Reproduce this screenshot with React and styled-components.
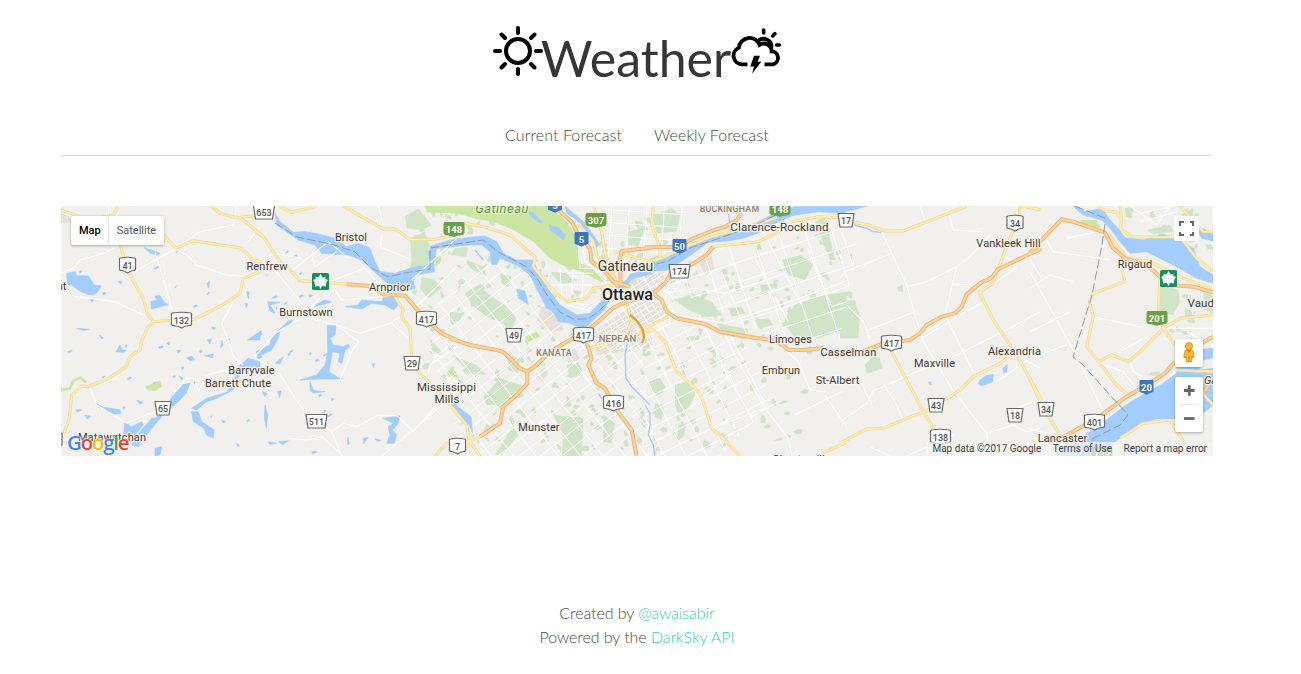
import React from 'react';
import styled, { createGlobalStyle } from 'styled-components';

const GlobalStyle = createGlobalStyle`
  *, *::before, *::after { box-sizing: border-box; }
  html { background: #fff; overflow: hidden; }
  body { margin: 0; font-family: Lato, sans-serif; font-weight: 300; font-size: 16px; line-height: 24px; color: #4a4a4a; }
`;

const Page = styled.div`
  width: 1274px;
  height: 674px;
  padding: 0 61px;
  display: flex;
  flex-direction: column;
`;
const Logo = styled.h1`
  margin: 0;
  padding-top: 19px;
  height: 115px;
  display: flex;
  justify-content: center;
  align-items: flex-start;
  font-weight: 400;
  color: #363636;
`;
const LogoText = styled.span`
  font-size: 50px;
  line-height: 78px;
  margin: 0 -1px 0 -3px;
`;
const LogoIcon = styled.svg`
  width: 52px;
  height: 52px;
  margin-top: 6px;
  flex: none;
  overflow: visible;
`;
const Nav = styled.nav`
  display: flex;
  justify-content: center;
  height: 41px;
  border-bottom: 1px solid #dbdbdb;
`;
const NavLink = styled.a`
  padding: 8px 16px;
  letter-spacing: 0.08px;
  color: #4a4a4a;
`;
const MapBox = styled.section`
  position: relative;
  margin-top: 50px;
  height: 250px;
  overflow: hidden;
  background: #f1f0ed;
  font-family: Roboto, sans-serif;
  font-weight: 400;
`;
const MapCanvas = styled.svg`
  display: block;
  width: 1152px;
  height: 250px;
`;
const Control = styled.div`
  position: absolute;
  background: #fff;
  border-radius: 2px;
  box-shadow: 0 1px 3px rgba(0, 0, 0, 0.3);
  display: flex;
`;
const TypeSwitch = styled(Control)`
  left: 10px;
  top: 10px;
  height: 29px;
`;
const TypeButton = styled.span`
  padding: 0 ${(p) => (p.$active ? 7 : 8)}px 0 8px;
  font-size: 11px;
  line-height: 29px;
  font-weight: ${(p) => (p.$active ? 500 : 400)};
  color: ${(p) => (p.$active ? '#000' : '#565656')};
  & + & { border-left: 1px solid #e6e6e6; }
`;
const Fullscreen = styled(Control)`
  right: 14px;
  top: 10px;
  width: 25px;
  height: 25px;
  box-shadow: none;
`;
const Pegman = styled(Control)`
  right: 10px;
  top: 133px;
  width: 28px;
  height: 28px;
`;
const Zoom = styled(Control)`
  right: 10px;
  top: 171px;
  width: 28px;
  height: 55px;
  flex-direction: column;
  align-items: center;
`;
const ZoomRule = styled.i`
  width: 19px;
  height: 1px;
  background: #e6e6e6;
`;
const Terms = styled.div`
  position: absolute;
  right: 0;
  bottom: 0;
  height: 14px;
  padding: 0 6px;
  display: flex;
  gap: 11.5px;
  font-size: 10px;
  line-height: 14px;
  color: #444;
  background: rgba(245, 245, 245, 0.7);
`;
const Google = styled.div`
  position: absolute;
  left: 6px;
  bottom: 1px;
  font: 600 20.5px/26px 'Open Sans', sans-serif;
  letter-spacing: -1.25px;
  text-shadow: 0 0 2px #fff, 0 0 2px #fff;
`;
const Letter = styled.span`
  color: ${(p) => p.$c};
`;
const Footer = styled.footer`
  margin-top: 145px;
  letter-spacing: -0.06px;
  text-align: center;
`;
const Line = styled.p`
  margin: 0;
`;
const Link = styled.a`
  color: #1fd6b6;
`;

/* Map geometry: each sector is drawn at three units per pixel from its own left edge. */
const sectors = [
  {
    x: 60,
    water: 'M20,205L45,200 50,212 85,213 103,240 124,243 112,262 100,270 82,268 60,258 35,240 22,240ZM272,290L290,285 285,273 300,272 312,290 325,300 300,305 275,312ZM50,370L88,373 70,377ZM118,390l12,8-4,4zM168,440l12,-20 6,14 13,2-8,6zM380,458l14,-5 10,10-14,4zM433,452L460,447 458,458ZM440,235l10,-5-4,20zM562,405L600,380 600,405ZM252,128l48,16-4,6-25,-5zM390,535L378,565 360,585 330,612 318,615 300,642 286,640 325,600 335,570 355,555 370,538ZM105,593L130,607 180,614 184,625 165,627 120,608ZM195,652L215,665 245,650 250,660 225,690 190,690ZM215,720L240,680 275,640 300,640 260,690 235,725ZM540,480L565,460 600,470 600,490 560,495 540,510 520,555 470,580 440,590 410,615 395,610 440,580 500,562 520,530ZM395,620L415,620 425,650 440,660 462,675 460,700 440,690 432,670 400,650ZM285,730l20,-5-5,25-15,5zM358,512l12,8-6,5zM442,405l12,-2-4,14zM485,405l5,15-8,8zM320,415l8,-5 0,10zM455,365l12,4-8,5zM560,260l7,1-2,20zM555,295l8,2-4,12zM175,230l10,-2-2,10zM75,630l18,4-12,8zM230,585l20,8-10,5zM485,645l12,5-8,3zM530,715l8,5-4,5z',
    park: 'M255,545L300,527 305,545 285,558 262,556Z',
    parkLine: 'M0,556L30,550 38,530 60,518 78,532',
    urban: 'M3,25L28,35 40,55 3,55Z',
    yellow: 'M180,118L205,200 235,255 250,280 262,325 280,350 315,347 395,345 440,325 490,298 540,265 550,220 600,200M280,350L262,370 245,405 240,435 210,455 198,485 150,518 85,545 65,543 35,570 30,620 25,650 10,690M310,88L347,130 400,107 470,118 545,130 580,165 605,170M3,15L60,35 120,37 160,30 175,3M455,3L480,25 530,38 605,30M540,38L605,90',
    white: 'M3,205L40,190 60,165 130,145 180,120M225,198L347,132 380,150 410,180 500,210 590,217M0,262L50,275 165,290 250,330M285,140L325,270 335,315M520,290L485,355 510,420 520,455 550,480M90,548L110,600 200,655 270,625 300,630 330,580 380,520 405,520 415,560 440,510 520,490M145,3L150,120M347,130L420,80 520,60 530,3M565,110L600,65',
  },
  {
    x: 255,
    water: 'M60,25L75,50 115,82 150,80 190,87 240,100 275,125 310,115 345,130 360,170 375,200 420,205 465,190 500,182 525,180 520,140 540,118 600,105 600,125 545,130 535,180 540,200 480,210 475,230 480,250 430,262 385,225 320,165 280,150 200,145 180,120 130,105 65,60ZM270,305L310,300 320,285 380,290 385,278 425,275 430,300 415,315 390,300 350,295 320,312ZM165,308L190,295 210,285 230,290 200,300ZM217,362L243,362 240,390 225,400 235,420 265,425 280,418 285,425 270,435 260,475 250,470 255,445 232,440 222,500 250,518 262,522 200,522 135,525 185,510 210,480 218,440ZM38,290L75,292 45,300 60,325 45,318ZM65,380l35,-32 15,-2-20,20zM3,395l15,-18 3,12zM3,440L45,420 50,395 75,378 70,400 50,435 10,455ZM385,640L435,632 430,655 413,675 425,690 417,715 395,715 405,690 400,665 415,655ZM325,700l15,-3-15,20zM278,697l5,20-5,2zM30,600l8,30-4,40-6,-30zM22,560l15,5-8,10zM165,530l10,25-10,-3zM165,555l45,5-35,4zM350,478l8,-4-2,14zM40,710l25,5-20,3zM70,710l30,-3-16,12zM60,475l25,-20-10,22zM360,702l18,4-10,3zM228,580l8,2-5,5zM68,560l10,-2-4,20z',
    park: 'M510,3L605,3 605,25 515,22ZM540,160l15,-8 5,15-15,15zM575,500l20,-15 5,25-20,5z',
    green: 'M450,35L490,10 530,60 500,75 455,70ZM465,100L510,80 525,130 520,180 470,180ZM500,215L540,225 560,250 520,280 495,250ZM525,400L560,440 555,450 530,435ZM515,365l35,5-20,10zM555,250l15,25-12,5zM470,160l35,5-15,30-25,-5z',
    urban: 'M30,205l12,5-8,8zM365,245l20,25-18,-5zM365,232l50,20-10,12z',
    yellow: 'M0,80L25,95 55,140 75,170 100,190 135,227 275,237M75,5L110,22 185,3M0,205L25,190 0,165M265,3L330,40 385,72 420,72 465,103 540,103 600,90M420,275L445,315 440,335 465,370 470,450 490,500 545,555 605,622M540,753L575,715 605,715',
    orange: 'M275,238L345,243 385,268 450,272 510,340 560,385 605,405',
    white: 'M50,185L100,245 165,325 180,345 245,360 315,385 405,355 490,300 605,185M100,205L170,150 220,110 280,160M170,150L180,185 245,140M210,235L330,190 360,225M230,240L260,285 380,275M180,300L140,340 60,385 0,455M245,360L310,410 290,440 255,525M3,460L70,500 120,580 150,620 230,680 265,655 305,665 370,630 425,632 475,680 545,600M380,753L480,670 605,560M100,700L155,705 200,695 265,753M410,355L460,400M520,505L525,480 605,425M200,275L165,310M230,680L260,753M0,170L60,145 140,160M370,3L385,60 M380,90L375,125 460,160M470,225L605,100',
  },
  {
    x: 450,
    water: 'M-60,125L0,105 75,95 105,93 140,110 160,145 200,165 250,165 262,195 285,240 330,300 380,330 420,325 460,282 480,275 463,315 430,345 400,372 360,355 325,350 310,320 290,310 265,260 240,210 200,180 150,160 140,178 125,178 120,140 95,120 60,120 0,125ZM345,3L370,25 400,50 430,90 448,118 438,130 410,85 380,45 350,25ZM470,285L500,245 530,225 540,208 605,192 605,207 545,222 530,240ZM200,252L225,258 235,298 205,280ZM298,60L325,68 345,88 340,105 325,92 300,75ZM230,15l22,10 25,28-10,0-25,-20zM8,570l15,35 40,30 5,50-10,-25-30,-20-20,-35z',
    waterLine: 'M540,350L535,400 525,450 528,520 545,545 600,600M75,135L100,165M445,565L455,580',
    park: 'M-75,3L300,3 350,50 375,90 385,130 390,175 430,190 465,215 455,232 395,200 340,182 300,160 250,110 190,75 130,50 80,42 20,25 -60,22ZM225,395L260,380 270,395 235,410ZM0,490l20,10 5,20-25,-10z',
    green: 'M45,265L85,240 125,275 165,300 200,335 185,375 150,350 110,335 65,300ZM15,130L55,125 50,155 0,150ZM50,165L100,185 110,215 60,190ZM150,205L185,215 175,245 155,235ZM100,575L150,520 215,540 205,570 160,600 110,600ZM5,450L80,480 110,510 60,505ZM310,630L400,640 395,753 335,753 340,690ZM350,480l35,-10 5,40-30,10zM170,450l40,10-5,45-30,-10zM460,630l35,25-10,60-25,-5zM190,660l15,30-50,60-20,0zM535,80l50,-15-20,60-30,-5zM0,320l40,5-15,25-25,-5zM235,190l18,20-15,5zM300,200l50,5 25,30-50,-5z',
    urban: 'M275,305L300,305 330,335 340,375 300,380 260,345ZM345,440l30,-10 15,35-35,10zM430,380L500,330 560,295 605,290 605,420 520,440 440,450ZM500,240l40,-20 60,10 0,50-60,20zM260,510l25,-25 10,20-20,25zM370,255l30,5-20,15z',
    yellow: 'M0,60L45,55 100,65 180,90 225,130 255,155 250,185 290,235 330,275 350,290 410,280 430,250 490,240M385,55L430,110 440,150 490,220M430,3L455,80 465,145 500,235M0,600L50,660 60,720 0,750M60,710L90,753M60,710L90,695M415,430L520,405 605,370M490,140L605,170M530,290L545,350 520,405',
    orange: 'M0,400L60,420 150,437 165,445 210,490 232,500 260,480 300,440 360,405 420,370 450,345 490,308 530,290 580,275 605,270M232,500L232,535 205,565 160,605 150,655 90,695M325,15L365,50 385,90 420,130 425,170 460,195 490,230 505,245M512,235L510,160 515,138 605,128M410,415L425,460 415,480 440,535 465,550 500,615 545,675 560,753M490,230L540,245',
    white: 'M385,135L390,190 430,190 470,235M400,135L405,170 435,190 470,225M350,205L430,205M300,200L290,240 430,240M330,190L335,270M370,195L365,260M400,200L395,280M350,300L410,315 490,260M340,290L420,300',
  },
  {
    x: 645,
    water: 'M0,185L60,160 100,130 140,115 200,100 260,85 330,55 380,30 450,5 600,3 600,25 520,20 450,30 400,50 350,80 300,98 250,108 190,112 130,155 70,195 0,200Z',
    waterLine: 'M0,600L15,625 15,660 10,690 25,720 30,753M255,60L250,25',
    park: 'M15,160l30,-10 5,15-30,8zM330,125l15,-8 5,15-12,3z',
    green: 'M90,285L145,265 165,275 200,290 232,330 185,337 130,315ZM430,320L460,290 540,270 605,260 605,370 520,400 450,400 420,360ZM410,165L470,150 505,180 480,225 430,210ZM510,50l30,-15 30,130-15,0zM90,540L145,525 150,570 130,610 100,630 90,600ZM5,530l40,-10 20,30-35,25zM20,30l60,-20 25,20-10,50-60,5zM215,355l80,15 10,35-70,-15zM250,310l40,-5 10,20-40,10zM30,595l25,5-5,45-20,-10zM100,660l25,-5-10,40-20,15zM330,345l40,-5 15,20-40,10zM345,240l45,-5-10,20-30,5z',
    urban: 'M0,200L60,200 55,240 25,260 0,250ZM160,170l40,-15 10,40-30,15zM0,290L35,290 60,330 0,360ZM155,195l10,25-25,-10z',
    yellow: 'M25,3L20,60 45,130 45,165M0,175L60,155 110,130 200,95 330,60 395,38M190,130L205,125 340,110 400,80 440,50 520,35 605,38M0,375L25,375 60,410 95,500 150,550 170,575 200,670 240,705 285,753M0,370L70,335M530,745L605,712',
    orange: 'M0,127L100,125 145,100 200,78 240,65 275,45 290,25M25,265L60,235 80,200 130,185 185,150 205,125M0,265L25,265 50,285 65,320 95,340 180,357 225,380 320,397 395,407 430,435 480,435 535,430',
    white: 'M60,265L150,250 240,265 320,240 420,205M95,330L240,355 420,295 600,230M370,110L420,205 470,300M490,135L560,305 605,290M395,410L460,470 495,555 540,560M240,390L280,470 360,610 430,700 440,753M360,610L200,670M180,370L250,520 320,635 400,590M270,500L130,610M450,630L590,560M540,570L605,665M230,200L310,400M330,160L430,350',
  },
  {
    x: 840,
    water: 'M0,3L80,3 40,15 0,22ZM415,535L420,525 438,512 460,508 458,530 425,543ZM488,490l14,-12-2,22-8,3zM265,533l8,-3 0,10z',
    waterLine: 'M42,60L80,70 100,80 125,82',
    green: 'M0,290L45,285 60,340 55,400 0,400ZM75,480L100,452 120,460 128,490 80,507ZM172,245l15,-5 2,22-15,-3z',
    yellow: 'M35,50L85,60 135,78 190,78 300,35 380,3M540,3L538,30 510,100 475,190 460,235 418,262 460,345 530,450 605,585M545,3L605,15M150,430L200,525 250,620 300,700 320,753M0,715L80,672 130,670 220,632 255,620 330,575 360,555 400,515 480,475 515,450M0,455L60,445',
    orange: 'M60,442L130,415 210,405 240,385 260,360 305,335 345,325 365,305 380,268 420,235 455,218 475,192 605,130',
    white: 'M125,80L155,145 200,240 225,330 250,410 335,550 440,685 450,753M0,220L15,200 155,145M200,245L260,230 350,185 385,160 450,90M350,185L315,330 400,500M85,375L225,320M245,400L430,290M120,550L140,540 230,500 330,460 480,385 600,320M0,650L80,595 100,555 135,545 165,590 190,645M0,520L65,535 100,610M340,237L410,240M500,155L530,190 460,235M530,450L600,490M470,530L600,440M440,685L520,660 560,680 600,670M240,3L260,60 M325,20L340,75 430,80M5,80L40,185M550,130L605,220M20,300L70,350 90,400M90,725L150,753M200,753L340,690M590,585L530,610',
  },
  {
    x: 1030,
    water: 'M128,3L140,3 165,20 205,12 225,22 240,45 268,75 285,98 340,105 400,88 450,105 490,130 510,185 549,210 549,235 500,220 440,185 400,165 350,140 300,145 270,110 240,70 215,45 160,30ZM495,60L549,85 549,108 515,100ZM80,753L110,722 200,668 280,605 320,580 400,535 440,505 549,490 549,600 500,640 380,642 330,655 300,680 240,720 200,753ZM440,440L549,430 549,458 520,465 500,510 440,510ZM490,560L549,570 549,590 500,600Z',
    park: 'M150,45L200,45 212,70 190,75 155,65ZM320,125l35,-10 5,12-25,10z',
    green: 'M385,240L445,255 450,290 430,330 390,325ZM350,75L420,60 430,80 370,88ZM465,310l30,10-5,25-25,-10zM365,500l25,0-5,15-30,-5zM450,30l40,-20 0,30zM520,255l29,15 0,60-29,-20zM285,10l25,-5-5,35-18,-5zM445,375l40,5-20,10zM150,730l40,-5 0,28-40,0z',
    urban: 'M505,520l44,-10 0,50-44,-5z',
    yellow: 'M200,3L230,18 260,22 275,45 270,70 305,95 400,97 450,95 500,160 549,200M270,3L275,50M235,85L290,160 360,170 460,220 549,250M275,185L285,230 190,265 178,290 190,335 170,425 205,470 260,540 300,575M205,470L245,450 295,470 330,440 400,370 450,340 549,330M390,210L385,330 400,370 435,420M0,520L30,590 90,690 120,720M270,700L340,655 420,645 470,725M500,545L549,600M435,495L549,500M450,3L520,80 549,80',
    orange: 'M0,145L30,110 95,43 130,50 225,83 250,130 285,160 350,180 420,240 490,245 549,262M75,710L200,640 290,575 350,540 405,505 435,470M515,415L549,395M520,565L549,520',
    white: 'M0,200L130,435 230,640M30,70L70,140 180,155 240,165M0,250L60,210 130,230M0,380L120,320M190,335L330,365 420,350M0,460L110,420M110,100L200,80M210,475L280,500 320,550M300,470L310,500 360,530M300,3L380,60 420,3M310,30L430,3M330,50L440,20M460,210L490,330M470,380L549,420M0,670L60,690M400,370L549,370M270,440L340,400',
  },
];

const boundaries = [
  'M275,223L297,237 335,245 355,252 370,267 388,277 405,273 430,269 430,248 470,242 483,240 500,253 527,267 538,280 547,295 560,312 573,319 587,319 597,313 610,300M645,267L668,261 690,248 720,238 760,223 785,210',
  'M1105,224L1102,245 1092,295 1073,357 1083,365 1128,415 1120,425 1090,440M1075,206L1092,213 1105,218',
];

/* Repeatable pseudo-random sequence for woodlots and concession roads. */
const sequence = (seed) => () => {
  seed = (seed * 16807) % 2147483647;
  return seed / 2147483647;
};

const woods = [
  [455, 255, 560, 330, 34, 38], [460, 330, 580, 450, 60, -36], [560, 345, 650, 450, 45, -32],
  [600, 212, 690, 262, 30, 10], [670, 270, 790, 350, 44, -20], [650, 350, 730, 450, 48, -25],
  [770, 235, 850, 350, 38, -15], [725, 330, 800, 450, 18, -20], [440, 210, 500, 265, 16, 30],
  [540, 255, 610, 300, 16, 0], [410, 210, 440, 290, 15, 0], [1145, 208, 1212, 245, 22, 10],
  [1155, 285, 1210, 335, 12, 0], [425, 300, 470, 380, 12, 30], [800, 290, 850, 335, 25, -15],
];
const woodPath = (() => {
  const next = sequence(4217);
  return woods.map(([x0, y0, x1, y1, n, tilt]) =>
    Array.from({ length: n }, () => {
      const x = x0 + next() * (x1 - x0);
      const y = y0 + next() * (y1 - y0);
      const a = ((tilt + (next() > 0.5 ? 90 : 0)) * Math.PI) / 180;
      const w = 2 + next() * 8;
      const h = 1.5 + next() * 4;
      const p = (u, v) => `${(x + u * Math.cos(a) - v * Math.sin(a)).toFixed(1)},${(y + u * Math.sin(a) + v * Math.cos(a)).toFixed(1)}`;
      return `M${p(0, 0)}L${p(w * 0.6, -1)} ${p(w, h * 0.3)} ${p(w * 0.8, h)} ${p(w * 0.3, h * 0.8)}Z`;
    }).join('')
  ).join('');
})();

const lakes = [[65, 250, 330, 455, 34], [230, 290, 330, 455, 12]];
const lakePath = (() => {
  const next = sequence(911);
  return lakes.map(([x0, y0, x1, y1, n]) =>
    Array.from({ length: n }, () => {
      const x = (x0 + next() * (x1 - x0)).toFixed(1);
      const y = (y0 + next() * (y1 - y0)).toFixed(1);
      const w = 1 + next() * 4;
      return `M${x},${y}l${w},${(-next() * 3).toFixed(1)} ${(w / 3).toFixed(1)},1.5 ${-w},2z`;
    }).join('')
  ).join('');
})();

const grids = [
  { id: 'west', area: 'M420,320L480,260 530,275 570,330 600,340 640,315 650,456 465,456Z', angle: -38, step: 13 },
  { id: 'south', area: 'M645,320L690,325 740,335 775,400 720,456 645,456Z', angle: -27, step: 14 },
  { id: 'east', area: 'M665,285L715,245 780,235 860,225 840,340 780,340Z', angle: -18, step: 19 },
  { id: 'city', area: 'M595,325L620,295 650,270 680,275 670,325 640,350 560,350Z', angle: -32, step: 5 },
  { id: 'north', area: 'M605,206L690,206 680,235 645,262 600,260Z', angle: 4, step: 13 },
];

const labels = [
  ['Bristol', 350.5, 241, 11], ['Renfrew', 266.5, 270, 11], ['Arnprior', 389, 291, 11.2], ['Burnstown', 305.5, 316, 11],
  ['Barryvale', 251, 374, 11], ['Barrett Chute', 237.5, 387, 11], ['Mississippi', 446, 391, 11.5], ['Mills', 446.5, 403, 11.5],
  ['Munster', 538.5, 431, 11], ['Limoges', 790, 343, 11], ['Casselman', 848, 356, 11], ['Embrun', 780.5, 374, 11],
  ['St-Albert', 837, 384, 11], ['Maxville', 934, 367, 11], ['Alexandria', 1014, 355, 11], ['Vankleek Hill', 1008, 247, 11],
  ['Clarence-Rockland', 779, 231, 11.6], ['Rigaud', 1134.5, 268, 11], ['Vaudreuil', 1211.5, 307, 11.5], ['Lancaster', 1062, 442, 11],
  ['Matawatchan', 111.5, 441, 11], ['Chesterville', 801, 463, 11], ['nt', 61, 290, 11],
];

/* Route markers: number, centre x, centre y, form. */
const shields = [
  ['653', 264, 212, 'county'], ['41', 127.5, 265, 'king'], ['132', 181.5, 320, 'king'], ['65', 163, 408, 'county'],
  ['417', 426.5, 319, 'king'], ['29', 412, 363, 'county'], ['511', 316.5, 421, 'county'], ['49', 514, 335, 'county'],
  ['417', 583.5, 335, 'king'], ['416', 613.5, 403, 'king'], ['7', 457.5, 446, 'king'], ['174', 679.5, 271, 'county'],
  ['17', 846, 220, 'county'], ['34', 1015, 223, 'king'], ['417', 891.5, 343, 'king'], ['43', 936, 405, 'county'],
  ['18', 1015, 415, 'county'], ['34', 1046, 409, 'county'], ['138', 940.5, 437, 'king'], ['401', 1094.5, 422, 'king'],
  ['148', 454, 229, 'green'], ['307', 596, 220, 'green'], ['148', 780, 209, 'green'], ['201', 1157, 318, 'green'], ['132', 1102, 454, 'green'],
  ['5', 581.5, 239, 'blue'], ['5', 555, 205, 'blue'], ['50', 679.5, 246, 'blue'], ['20', 1146.5, 387, 'blue'],
  ['', 54, 440, 'king'],
];

const shieldForm = {
  king: (w) => `M${-w + 1.5},-7Q0,-8.5 ${w - 1.5},-7Q${w},-7 ${w - 0.5},-4V3Q${w},5.5 ${w - 2.5},5.5Q3,5.8 0,8Q-3,5.8 ${-w + 2.5},5.5Q${-w},5.5 ${-w + 0.5},3V-4Q${-w},-7 ${-w + 1.5},-7Z`,
  county: (w) => `M${-w},-6.5H${w}L${w - 2},7H${-w + 2}Z`,
  green: (w) => `M${-w + 1},-6.5H${w - 1}L${w - 0.5},-5V4L${w - 1.5},5.5Q3,6 0,7.3Q-3,6 ${-w + 1.5},5.5L${-w + 0.5},4V-5Z`,
  blue: () => 'M-6.5,-6.5H6.5V4.5Q3,5.5 0,7.2Q-3,5.5 -6.5,4.5Z',
};
const shieldFill = { king: '#fff', county: '#fff', green: '#6a9f43', blue: '#3b76c4' };

function Shield({ text, x, y, form }) {
  const plain = form === 'king' || form === 'county';
  const half = text.length > 2 ? 10.5 : form === 'county' ? 8 : 8.5;
  return (
    <g transform={`translate(${x} ${y})`}>
      <path d={shieldForm[form](half)} fill={shieldFill[form]} stroke={plain ? '#6a6a6a' : shieldFill[form]} strokeWidth={plain ? 1.2 : 1} strokeLinejoin="round" />
      <text y="3.5" textAnchor="middle" fontSize={plain ? 9 : 9.5} fontWeight={plain ? 500 : 700} fill={plain ? '#555' : '#fff'}>{text}</text>
    </g>
  );
}

function ParkBadge({ x, y }) {
  return (
    <g transform={`translate(${x} ${y})`}>
      <rect x="-8.5" y="-8.5" width="17" height="17" rx="1.5" fill="#16915d" />
      <path d="M0,-7.5L2.2,-4 4.8,-4.8 5,-2.4 7.5,-1.6 5.8,1 5.4,5 2.6,4.4 .8,5 .7,7H-.7L-.8,5 -2.6,4.4 -5.4,5 -5.8,1 -7.5,-1.6 -5,-2.4 -4.8,-4.8 -2.2,-4Z" fill="#fff" />
    </g>
  );
}

function Sectors({ part, ...style }) {
  return (
    <g strokeLinejoin="round" {...style}>
      {sectors.map((s) => s[part] && <path key={s.x} d={s[part]} transform={`translate(${s.x} 205) scale(.33333)`} />)}
    </g>
  );
}

function Terrain() {
  return (
    <MapCanvas viewBox="61 206 1152 250">
      <Sectors part="urban" fill="#e7e1da" />
      <Sectors part="green" fill="#d0e4c8" />
      <path d={woodPath} fill="#d0e4c8" />
      <Sectors part="park" fill="#cbe6a3" />
      <Sectors part="parkLine" fill="none" stroke="#cbe6a3" strokeWidth="8" />
      <path d={lakePath} fill="#a3ccff" />
      {grids.map(({ id, area, angle, step }) => (
        <g key={id}>
          <clipPath id={id}><path d={area} /></clipPath>
          <g clipPath={`url(#${id})`}>
            <g transform={`rotate(${angle} 640 330)`} stroke="#fff" strokeWidth="0.9">
              {Array.from({ length: Math.ceil(600 / step) }, (_, i) => (
                <path key={i} d={`M340,${30 + i * step}H940M${340 + i * step * 1.35},30V630`} />
              ))}
            </g>
          </g>
        </g>
      ))}
      <Sectors part="water" fill="#a3ccff" stroke="#a3ccff" strokeWidth="2" />
      <Sectors part="waterLine" fill="none" stroke="#a3ccff" strokeWidth="4" />
      <Sectors part="white" fill="none" stroke="#fff" strokeWidth="3.2" />
      <Sectors part="yellow" fill="none" stroke="#f0d893" strokeWidth="9" />
      <Sectors part="yellow" fill="none" stroke="#ffebae" strokeWidth="5.5" />
      <Sectors part="orange" fill="none" stroke="#eeb36d" strokeWidth="12" />
      <Sectors part="orange" fill="none" stroke="#fdd09a" strokeWidth="7" />
      {boundaries.map((d) => <path key={d} d={d} fill="none" stroke="#8f959a" strokeWidth="0.9" strokeDasharray="9 3" />)}
      <path d="M630,315Q644,325 644,338L642,343" fill="none" stroke="#e3a13a" strokeWidth="2.2" />
      {shields.map(([t, x, y, form]) => <Shield key={`${t}-${x}`} text={t} x={x} y={y} form={form} />)}
      <ParkBadge x={320.5} y={281.5} />
      <ParkBadge x={1168.5} y={278.5} />
      <g textAnchor="middle" paintOrder="stroke" stroke="#f5f4f1" strokeWidth="2.5" strokeLinejoin="round" fill="#45392f">
        {labels.map(([t, x, y, size]) => <text key={t} x={x + 0.5} y={y} fontSize={size} letterSpacing="0.12">{t}</text>)}
        <text x="625.5" y="271" fontSize="14">Gatineau</text>
        <text x="627.5" y="299.5" fontSize="16" fontWeight="500" fill="#222">Ottawa</text>
        <text x="502" y="213" fontSize="12.8" fontStyle="italic" letterSpacing=".55" fill="#5f9944" stroke="#e4f2ce">Gatineau</text>
        <text x="1221" y="384" fontSize="11" fontStyle="italic">Garden</text>
        <g fill="#90806d" fontSize="9" fontWeight="500" letterSpacing=".25">
          <text x="729.5" y="212" fontSize="8.8">BUCKINGHAM</text>
          <text x="617.5" y="342" fontSize="9.4">NEPEAN</text>
          <text x="554" y="356">KANATA</text>
        </g>
      </g>
    </MapCanvas>
  );
}

const googleLetters = [['G', '#4285f4'], ['o', '#ea4335'], ['o', '#fbbc05'], ['g', '#4285f4'], ['l', '#34a853'], ['e', '#ea4335']];

export default function App() {
  return (
    <>
      <GlobalStyle />
      <Page>
        <Logo>
          <LogoIcon viewBox="0 0 52 52" fill="none" stroke="#000" strokeWidth="4" strokeLinecap="round">
            <circle cx="26" cy="26" r="12" />
            <path d="M26,3V8M26,44V49M3,26H8M44,26H49M9.5,9.5L13,13M39,39L42.5,42.5M42.5,9.5L39,13M13,39L9.5,42.5" />
          </LogoIcon>
          <LogoText>Weather</LogoText>
          <LogoIcon viewBox="0 0 52 52" fill="none" stroke="#000" strokeWidth="3.8">
            <path d="M17.5,39.3H12A8.6,8.6 0 0 1 8.8,22.8A10.8,10.8 0 0 1 29.6,19.8A7.8,7.8 0 0 1 41.6,26.3A6.6,6.6 0 0 1 43,39.3H34.5" />
            <path d="M27.8,16A8,7.6 0 0 1 41.2,23" />
            <path d="M33.7,5V8M44.9,8.7L42.7,10.9M46.6,20H49.4" strokeLinecap="round" strokeWidth="3.6" />
            <path d="M24,30.7H30L27.7,36.7H31.3L22,48.7L24,41.5H20.3Z" fill="#000" stroke="none" />
          </LogoIcon>
        </Logo>
        <Nav>
          <NavLink>Current Forecast</NavLink>
          <NavLink>Weekly Forecast</NavLink>
        </Nav>
        <MapBox>
          <Terrain />
          <TypeSwitch>
            <TypeButton $active>Map</TypeButton>
            <TypeButton>Satellite</TypeButton>
          </TypeSwitch>
          <Fullscreen>
            <svg width="25" height="25" fill="none" stroke="#666" strokeWidth="2">
              <path d="M6,10V6H10M16,6H19V10M19,16V19H16M10,19H6V16" />
            </svg>
          </Fullscreen>
          <Pegman>
            <svg width="28" height="28" fill="#fab72a" stroke="#cf8a22" strokeWidth=".7">
              <path d="M10,11.5Q14,8.5 18,11.5L19.3,18 17.8,19 17,17 16.5,23H14.3V18H13.7V23H11.5L11,17 10.2,19 8.7,18Z" />
              <circle cx="14" cy="7.2" r="3.6" />
              <path d="M12,11L14,14 16,11Z" fill="#e87722" stroke="none" />
            </svg>
          </Pegman>
          <Zoom>
            <svg width="28" height="27" stroke="#666" strokeWidth="2.8"><path d="M9,13.5H19.5M14.3,8.3V18.8" /></svg>
            <ZoomRule />
            <svg width="28" height="27" stroke="#666" strokeWidth="2.8"><path d="M9,13.5H19.5" /></svg>
          </Zoom>
          <Google>{googleLetters.map(([l, c], i) => <Letter key={i} $c={c}>{l}</Letter>)}</Google>
          <Terms>
            <span>Map data ©2017 Google</span>
            <span>Terms of Use</span>
            <span>Report a map error</span>
          </Terms>
        </MapBox>
        <Footer>
          <Line>Created by <Link>@awaisabir</Link></Line>
          <Line>Powered by the <Link>DarkSky API</Link></Line>
        </Footer>
      </Page>
    </>
  );
}
